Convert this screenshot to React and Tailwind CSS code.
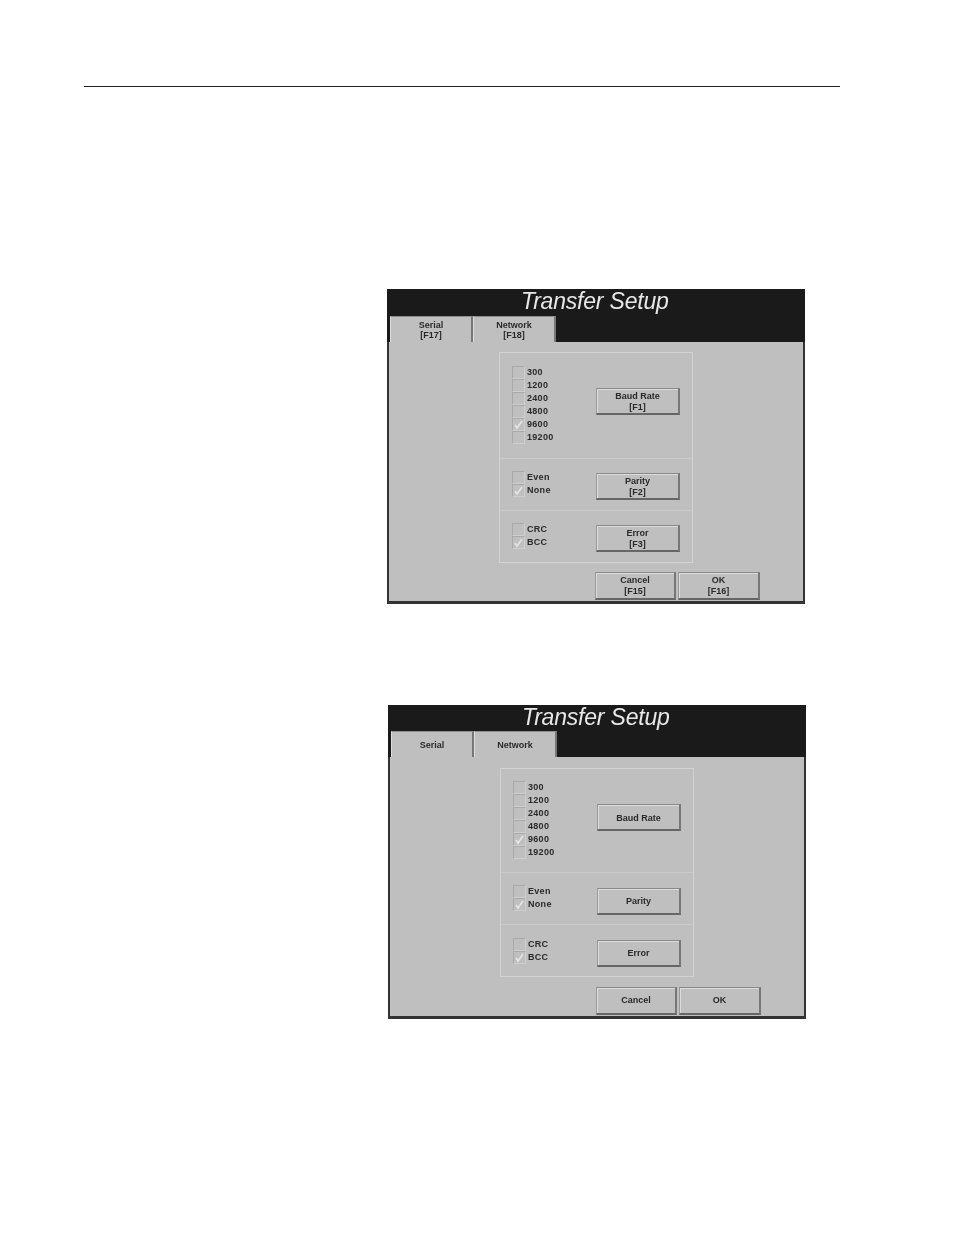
import React from 'react';

const font = { sans: "font-['Liberation_Sans',Arial,sans-serif]" };

const Box = ({ checked }) => (
  <span className="flex h-[13px] w-[13px] shrink-0 items-center justify-center border border-[#cfcfcf] border-t-[#a9a9a9] border-l-[#a9a9a9]">
    {checked && (
      <svg width="11" height="11" viewBox="0 0 11 11" fill="none">
        <path d="M2 6l2 3 5-7" stroke="#e6e6e6" strokeWidth="1.6" />
      </svg>
    )}
  </span>
);

const Check = ({ label, checked }) => (
  <div className="flex h-[13px] items-center gap-[2px] text-[9px] leading-none font-bold text-[#2a2a2a]">
    <Box checked={checked} />
    <span className="tracking-[0.3px]">{label}</span>
  </div>
);

const Btn = ({ label, sub, className }) => (
  <div className={`flex flex-col items-center justify-center border border-t-[#8a8a8a] border-l-[#9a9a9a] border-r-2 border-b-2 border-r-[#777777] border-b-[#666666] bg-[#bfbfbf] text-[9px] leading-[11px] font-bold text-[#2a2a2a] shadow-[inset_1px_1px_0_#dcdcdc] ${className}`}>
    <span>{label}</span>
    {sub && <span>{sub}</span>}
  </div>
);

const Section = ({ items, checked, button, sub, className, boxTop, btnTop }) => (
  <div className={`flex pl-[12px] ${className}`}>
    <div className={`w-[84px] ${boxTop}`}>
      {items.map((i) => (
        <Check key={i} label={i} checked={i === checked} />
      ))}
    </div>
    <Btn label={button} sub={sub} className={`h-[27px] w-[84px] ${btnTop}`} />
  </div>
);

const Tab = ({ label, sub }) => (
  <div className="flex h-[26px] w-[83px] flex-col items-center justify-center border-t border-l border-r-2 border-t-[#8f8f8f] border-l-[#dddddd] border-r-[#777777] bg-[#bfbfbf] text-[9px] leading-[10px] font-bold text-[#2a2a2a]">
    <span>{label}</span>
    {sub && <span>{sub}</span>}
  </div>
);

const Screen = ({ keys, sizes, className }) => (
  <div className={`w-[418px] ${className}`}>
    <div className="bg-[#1a1a1a] pl-[3px]">
      <div className={`pl-[131px] text-[23px] leading-none font-normal tracking-[-0.2px] text-[#e8e8e8] italic ${sizes.title}`}>
        Transfer Setup
      </div>
      <div className="flex">
        <Tab label="Serial" sub={keys && '[F17]'} />
        <Tab label="Network" sub={keys && '[F18]'} />
      </div>
    </div>
    <div className={`border-x-2 border-b-[3px] border-x-[#333333] border-b-[#333333] bg-[#bfbfbf] ${sizes.body}`}>
      <div className="ml-[110px] w-[194px] border border-[#d2d2d2]">
        <Section
          items={['300', '1200', '2400', '4800', '9600', '19200']}
          checked="9600"
          button="Baud Rate"
          sub={keys && '[F1]'}
          className={sizes.s1}
          boxTop={sizes.b1}
          btnTop="mt-[35px] pt-[2px]"
        />
        <Section
          items={['Even', 'None']}
          checked="None"
          button="Parity"
          sub={keys && '[F2]'}
          className={`border-t border-[#cacaca] ${sizes.s2}`}
          boxTop={sizes.b2}
          btnTop={sizes.btn2}
        />
        <Section
          items={['CRC', 'BCC']}
          checked="BCC"
          button="Error"
          sub={keys && '[F3]'}
          className={`border-t border-[#cacaca] ${sizes.s3}`}
          boxTop={sizes.b3}
          btnTop={sizes.btn3}
        />
      </div>
      <div className={`ml-[206px] flex gap-[2px] ${sizes.foot}`}>
        <Btn label="Cancel" sub={keys && '[F15]'} className="h-[28px] w-[81px]" />
        <Btn label="OK" sub={keys && '[F16]'} className="h-[28px] w-[82px]" />
      </div>
    </div>
  </div>
);

export default function App() {
  return (
    <div className={`min-h-[1235px] bg-white pt-[86px] ${font.sans}`}>
      <div className="mx-[84px] h-px w-[756px] bg-[#222222]" />
      <div className="blur-[0.5px]">
        <Screen
          keys
          className="mt-[202px] ml-[387px]"
          sizes={{
            title: 'h-[27px] pt-[1px]',
            body: 'h-[262px] pt-[10px]',
            s1: 'h-[105px]',
            s2: 'h-[52px]',
            s3: 'h-[52px]',
            b1: 'pt-[13px]',
            b2: 'pt-[12px]',
            b3: 'pt-[12px]',
            btn2: 'mt-[14px] pt-px',
            btn3: 'mt-[14px] pt-px',
            foot: 'mt-[9px]',
          }}
        />
        <Screen
          className="mt-[101px] ml-[388px]"
          sizes={{
            title: 'h-[26px] pt-px',
            body: 'h-[262px] pt-[11px]',
            s1: 'h-[103px]',
            s2: 'h-[52px]',
            s3: 'h-[52px]',
            b1: 'pt-[12px]',
            b2: 'pt-[12px]',
            b3: 'pt-[13px]',
            btn2: 'mt-[15px]',
            btn3: 'mt-[15px]',
            foot: 'mt-[10px]',
          }}
        />
      </div>
    </div>
  );
}
